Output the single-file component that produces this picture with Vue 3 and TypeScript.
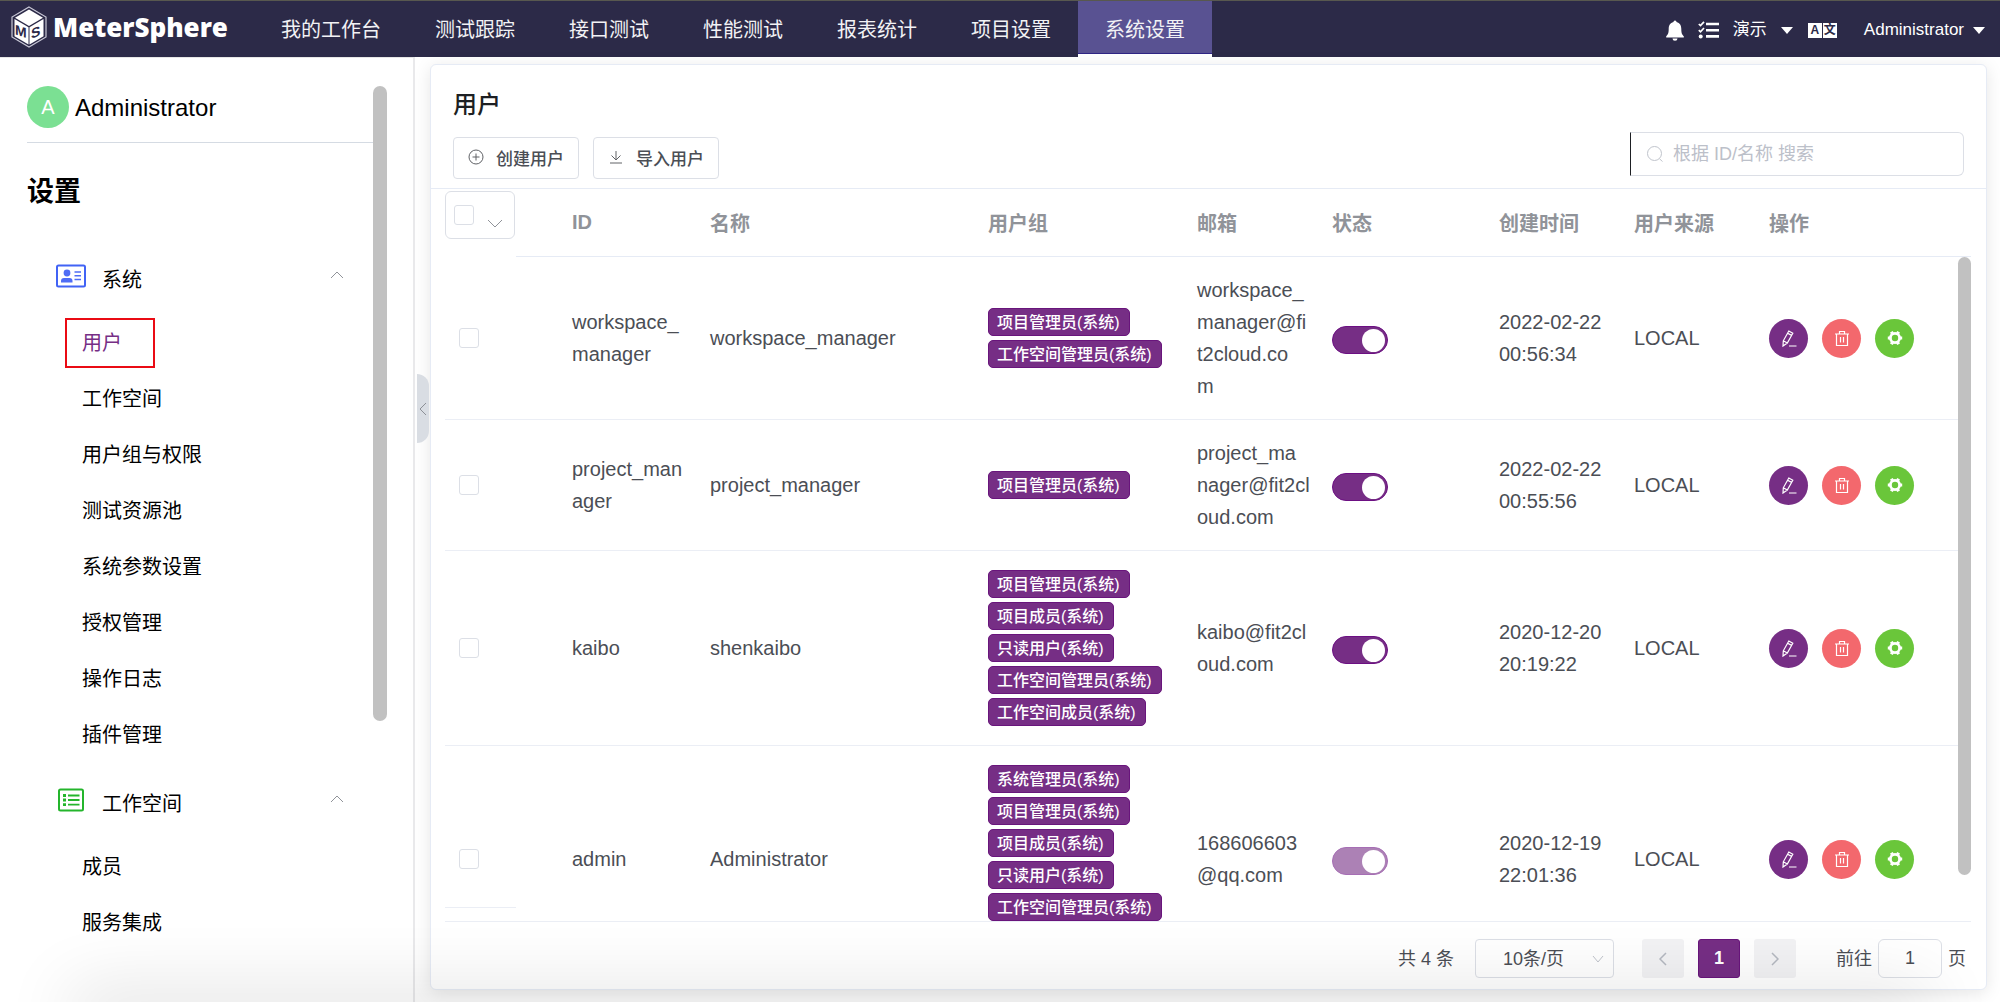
<script setup lang="ts">
import { ref } from 'vue'

interface MenuGroup {
  title: string
  icon: 'card' | 'list'
  items: string[]
}

interface User {
  id: string
  name: string
  groups: string[]
  email: string
  enabled: boolean
  locked: boolean
  created: string
  source: string
}

const navItems: string[] = ['我的工作台', '测试跟踪', '接口测试', '性能测试', '报表统计', '项目设置', '系统设置']
const activeNav = ref('系统设置')

const menuGroups: MenuGroup[] = [
  {
    title: '系统',
    icon: 'card',
    items: ['用户', '工作空间', '用户组与权限', '测试资源池', '系统参数设置', '授权管理', '操作日志', '插件管理'],
  },
  { title: '工作空间', icon: 'list', items: ['成员', '服务集成'] },
]
const activeMenu = ref('用户')

const columns: string[] = ['ID', '名称', '用户组', '邮箱', '状态', '创建时间', '用户来源', '操作']

const users = ref<User[]>([
  {
    id: 'workspace_\nmanager',
    name: 'workspace_manager',
    groups: ['项目管理员(系统)', '工作空间管理员(系统)'],
    email: 'workspace_\nmanager@fi\nt2cloud.co\nm',
    enabled: true,
    locked: false,
    created: '2022-02-22\n00:56:34',
    source: 'LOCAL',
  },
  {
    id: 'project_man\nager',
    name: 'project_manager',
    groups: ['项目管理员(系统)'],
    email: 'project_ma\nnager@fit2cl\noud.com',
    enabled: true,
    locked: false,
    created: '2022-02-22\n00:55:56',
    source: 'LOCAL',
  },
  {
    id: 'kaibo',
    name: 'shenkaibo',
    groups: ['项目管理员(系统)', '项目成员(系统)', '只读用户(系统)', '工作空间管理员(系统)', '工作空间成员(系统)'],
    email: 'kaibo@fit2cl\noud.com',
    enabled: true,
    locked: false,
    created: '2020-12-20\n20:19:22',
    source: 'LOCAL',
  },
  {
    id: 'admin',
    name: 'Administrator',
    groups: ['系统管理员(系统)', '项目管理员(系统)', '项目成员(系统)', '只读用户(系统)', '工作空间管理员(系统)'],
    email: '168606603\n@qq.com',
    enabled: true,
    locked: true,
    created: '2020-12-19\n22:01:36',
    source: 'LOCAL',
  },
])

const keyword = ref('')
const pageSize = ref('10')
const jumpTo = ref('1')
</script>

<template>
  <div class="shell">
    <header class="topbar">
      <a class="brand" href="#">
        <svg width="36" height="42" viewBox="0 0 36 42" aria-hidden="true">
          <path d="M18 1 L35 11 V31 L18 41 L1 31 V11 Z" fill="none" stroke="#c9c8d6" stroke-width="1.2" />
          <path d="M18 3.500 L32 11.700 L18 20 L4 11.700 Z" fill="#fff" />
          <path d="M3.500 13 L17.500 21.200 V38.500 L3.500 30.300 Z" fill="#fff" />
          <path d="M32.500 13 L18.500 21.200 V38.500 L32.500 30.300 Z" fill="#fff" />
          <text x="4" y="27" class="cube-letter" transform="skewY(18)">M</text>
          <text x="20" y="41" class="cube-letter" transform="skewY(-22)">S</text>
        </svg>
        <span class="brand-name">MeterSphere</span>
      </a>
      <nav class="nav">
        <a
          v-for="item in navItems"
          :key="item"
          href="#"
          class="nav-item"
          :class="{ active: item === activeNav }"
          @click.prevent="activeNav = item"
          >{{ item }}</a
        >
      </nav>
      <div class="tools">
        <button class="tool" type="button" aria-label="通知">
          <svg width="18" height="21" viewBox="0 0 18 21" fill="#fff">
            <path d="M9 0.500 a1.500 1.500 0 0 1 1.500 1.600 C14 3 15.300 5.500 15.300 9 C15.300 13.500 16.300 14.800 17.800 16.200 V17.500 H0.200 V16.200 C1.700 14.800 2.700 13.500 2.700 9 C2.700 5.500 4 3 7.500 2.100 A1.500 1.500 0 0 1 9 0.500 Z" />
            <path d="M6.500 18.500 h5 a2.500 2.200 0 0 1 -5 0 Z" />
          </svg>
        </button>
        <button class="tool" type="button" aria-label="任务">
          <svg width="21" height="18" viewBox="0 0 21 18" fill="none" stroke="#fff">
            <path d="M8 3 H21 M8 9.200 H21 M8 15.400 H21" stroke-width="2.600" />
            <path d="M0.800 3 L2.500 4.600 L6 0.800 M0.800 9.200 L2.500 10.800 L6 7" stroke-width="1.700" />
            <circle cx="2.700" cy="15.400" r="2" fill="#fff" stroke="none" />
          </svg>
        </button>
        <button class="tool workspace" type="button">
          演示
          <svg width="12" height="7" viewBox="0 0 12 7"><path d="M0 0 H12 L6 7 Z" fill="#fff" /></svg>
        </button>
        <button class="tool lang" type="button" aria-label="语言">
          <span>A</span><span>文</span>
        </button>
        <button class="tool account" type="button">
          Administrator
          <svg width="12" height="7" viewBox="0 0 12 7"><path d="M0 0 H12 L6 7 Z" fill="#fff" /></svg>
        </button>
      </div>
    </header>

    <div class="body">
      <aside class="sidebar">
        <div class="side-content">
          <div class="profile">
            <span class="avatar">A</span>
            <span class="profile-name">Administrator</span>
          </div>
          <h2 class="side-title">设置</h2>
          <section v-for="group in menuGroups" :key="group.title">
            <button class="group-head" type="button">
              <span class="group-icon">
                <svg v-if="group.icon === 'card'" width="30" height="24" viewBox="0 0 30 24">
                  <rect x="1" y="1.500" width="28" height="21" rx="1.500" fill="none" stroke="#4163f5" stroke-width="2" />
                  <circle cx="11" cy="9" r="3.400" fill="#4f6df5" />
                  <path d="M5 18.500 V17 Q5 14 8 14 H13.500 Q16.500 14 16.500 17 V18.500 Z" fill="#4f6df5" />
                  <path d="M18.500 8 H25 M18.500 11.700 H25 M18.500 15.400 H25" stroke="#4f6df5" stroke-width="1.500" />
                </svg>
                <svg v-else width="26" height="24" viewBox="0 0 26 24" fill="none" stroke="#24b52c">
                  <rect x="1" y="1.500" width="24" height="21" rx="1.500" stroke-width="2" />
                  <path d="M10 7.500 H21.500 M10 12 H21.500 M10 16.700 H21.500" stroke-width="1.800" />
                  <path d="M5 7.500 H8 M5 12 H8 M5 16.700 H8" stroke-width="2.800" />
                </svg>
              </span>
              <span class="group-title">{{ group.title }}</span>
              <svg class="group-arrow" width="14" height="8" viewBox="0 0 14 8" fill="none" stroke="#909399">
                <path d="M1 7 L7 1 L13 7" />
              </svg>
            </button>
            <ul class="side-menu">
              <li v-for="item in group.items" :key="item">
                <a
                  href="#"
                  :class="{ active: item === activeMenu && group.icon === 'card' }"
                  @click.prevent="activeMenu = item"
                  >{{ item }}</a
                >
              </li>
            </ul>
          </section>
        </div>
        <div class="side-rail"><div class="side-thumb"></div></div>
      </aside>

      <main class="main">
        <button class="fold" type="button" aria-label="收起菜单">
          <svg width="8" height="14" viewBox="0 0 8 14" fill="none" stroke="#8d9096"><path d="M7 1 L1 7 L7 13" /></svg>
        </button>
        <div class="card">
          <div class="card-head">
            <h1 class="title">用户</h1>
            <div class="toolbar">
              <div class="actions">
                <button class="btn" type="button">
                  <svg width="16" height="16" viewBox="0 0 16 16" fill="none" stroke="#606266">
                    <circle cx="8" cy="8" r="7" />
                    <path d="M8 4.500 V11.500 M4.500 8 H11.500" />
                  </svg>
                  创建用户
                </button>
                <button class="btn" type="button">
                  <svg width="16" height="16" viewBox="0 0 16 16" fill="none" stroke="#606266">
                    <path d="M8 2 V11 M3.500 6.500 L8 11 L12.500 6.500 M2 14 H14" />
                  </svg>
                  导入用户
                </button>
              </div>
              <label class="search">
                <svg width="18" height="18" viewBox="0 0 18 18" fill="none" stroke="#c0c4cc">
                  <circle cx="8.500" cy="8.500" r="7" />
                  <path d="M13.500 13.800 L16.500 16.500" />
                </svg>
                <input v-model="keyword" type="text" placeholder="根据 ID/名称 搜索" aria-label="搜索" />
              </label>
            </div>
          </div>

          <div class="table-area">
            <div class="table-view">
              <table class="users">
                <colgroup>
                  <col class="c-check" />
                  <col class="c-gap" />
                  <col class="c-id" />
                  <col />
                  <col class="c-group" />
                  <col class="c-mid" />
                  <col class="c-status" />
                  <col class="c-mid" />
                  <col class="c-mid" />
                  <col class="c-ops" />
                </colgroup>
                <thead>
                  <tr>
                    <th class="pick-all">
                      <div class="pick-box">
                        <input type="checkbox" class="tick" aria-label="全选" />
                        <svg width="16" height="9" viewBox="0 0 16 9" fill="none" stroke="#909399"><path d="M1 1 L8 8 L15 1" /></svg>
                      </div>
                    </th>
                    <th></th>
                    <th v-for="col in columns" :key="col">{{ col }}</th>
                  </tr>
                </thead>
                <tbody>
                  <tr v-for="user in users" :key="user.name">
                    <td><input type="checkbox" class="tick" :aria-label="user.name" /></td>
                    <td></td>
                    <td>{{ user.id }}</td>
                    <td>{{ user.name }}</td>
                    <td class="group-cell">
                      <div class="tags">
                        <span v-for="group in user.groups" :key="group" class="tag">{{ group }}</span>
                      </div>
                    </td>
                    <td>{{ user.email }}</td>
                    <td>
                      <input v-model="user.enabled" type="checkbox" role="switch" class="switch" :disabled="user.locked" aria-label="状态" />
                    </td>
                    <td>{{ user.created }}</td>
                    <td>{{ user.source }}</td>
                    <td>
                      <div class="ops">
                        <button class="op edit" type="button" aria-label="编辑">
                          <svg width="16" height="17" viewBox="0 0 16 17" fill="none" stroke="#fff" stroke-width="1.200">
                            <path d="M7.800 1 L11.800 3.200 L6.300 13 L2 16 L2.300 10.800 Z M6.600 3.200 L10.600 5.400 M2.300 10.800 L6.300 13 M8 16 H15.500" />
                          </svg>
                        </button>
                        <button class="op remove" type="button" aria-label="删除">
                          <svg width="16" height="17" viewBox="0 0 16 17" fill="none" stroke="#fff" stroke-width="1.200">
                            <path d="M1 4 H15 M5.500 4 V1.500 H10.500 V4 M2.500 4 V15.500 H13.500 V4 M6.500 7 V12.500 M9.500 7 V12.500" />
                          </svg>
                        </button>
                        <button class="op config" type="button" aria-label="设置">
                          <svg width="16" height="16" viewBox="0 0 16 16" fill="none" stroke="#fff">
                            <circle cx="8" cy="8" r="4.600" stroke-width="2.800" />
                            <path d="M12.500 8 H15.200 M0.800 8 H3.500 M10.200 4.200 L11.600 1.800 M5.800 4.200 L4.400 1.800 M10.200 11.800 L11.600 14.200 M5.800 11.800 L4.400 14.200" stroke-width="3.200" />
                          </svg>
                        </button>
                      </div>
                    </td>
                  </tr>
                </tbody>
              </table>
            </div>
            <div class="rail"><div class="thumb"></div></div>
          </div>

          <footer class="pager">
            <span class="total">共 4 条</span>
            <span class="size">
              <select v-model="pageSize" aria-label="每页条数">
                <option value="10">10条/页</option>
              </select>
              <svg width="12" height="8" viewBox="0 0 12 8" fill="none" stroke="#c0c4cc"><path d="M1 1 L6 7 L11 1" /></svg>
            </span>
            <button class="page" type="button" aria-label="上一页" disabled>
              <svg width="8" height="14" viewBox="0 0 8 14" fill="none" stroke="#b4b8c0" stroke-width="1.500"><path d="M7 1 L1 7 L7 13" /></svg>
            </button>
            <button class="page current" type="button">1</button>
            <button class="page" type="button" aria-label="下一页" disabled>
              <svg width="8" height="14" viewBox="0 0 8 14" fill="none" stroke="#b4b8c0" stroke-width="1.500"><path d="M1 1 L7 7 L1 13" /></svg>
            </button>
            <label class="jump">前往 <input v-model="jumpTo" type="text" /> 页</label>
          </footer>
        </div>
      </main>
    </div>
    <div class="bottom-shade"></div>
  </div>
</template>

<style>
body {
  margin: 0;
}
</style>

<style scoped>
* {
  box-sizing: border-box;
}
.shell {
  display: flex;
  flex-direction: column;
  height: 100vh;
  overflow: hidden;
  position: relative;
  background: #fff;
  color: #4b4e55;
  font-family: 'Liberation Sans', 'Noto Sans CJK SC', sans-serif;
  font-size: 20px;
}
a {
  color: inherit;
  text-decoration: none;
}
button,
input,
select {
  font-family: inherit;
  color: inherit;
  margin: 0;
}
button {
  border: 0;
  padding: 0;
  background: none;
}
svg {
  display: block;
  flex: none;
}

.topbar {
  display: flex;
  flex: none;
  height: 57px;
  border-top: 1px solid #58584f;
  background: #2c2a48;
  color: #fff;
}
.brand {
  display: flex;
  align-items: center;
  gap: 6px;
  width: 254px;
  padding: 0 0 4px 11px;
}
.brand-name {
  font-family: 'Open Sans', sans-serif;
  font-weight: 800;
  font-size: 26px;
}
.cube-letter {
  font-size: 14px;
  font-weight: 700;
  fill: #2c2a48;
}
.nav {
  display: flex;
}
.nav-item {
  display: flex;
  align-items: center;
  height: 56px;
  padding: 2px 27px 0;
  border-bottom: 3px solid transparent;
  color: #f2f2f5;
}
.nav-item.active {
  background: #595292;
  background-clip: padding-box;
  border-bottom-color: #fff;
  box-shadow: inset 0 -1px #2f2585;
}
.tools {
  display: flex;
  align-items: center;
  margin-left: auto;
  padding: 2px 15px 0 0;
}
.tool {
  display: flex;
  align-items: center;
  font-size: 17px;
  line-height: 24px;
  margin-left: 14px;
}
.workspace {
  gap: 14px;
}
.lang {
  gap: 1px;
  margin-left: 15px;
}
.lang span {
  width: 14px;
  height: 15px;
  background: #fff;
  color: #2c2a48;
  font-size: 12px;
  font-weight: 700;
  line-height: 15px;
  text-align: center;
}
.account {
  gap: 9px;
  margin-left: 27px;
}

.body {
  display: flex;
  flex: 1;
  min-height: 0;
}
.sidebar {
  display: flex;
  flex: none;
  width: 415px;
  padding: 28px 26px 9px 27px;
  border-top: 1px solid #e6e6e6;
  border-right: 2px solid #e9e9eb;
  color: #000;
}
.side-content {
  flex: 1;
  min-width: 0;
}
.profile {
  display: flex;
  align-items: center;
  gap: 6px;
  height: 57px;
  padding-bottom: 14px;
  border-bottom: 1px solid #d5dbe3;
  font-size: 24px;
}
.profile-name {
  padding-top: 2px;
}
.avatar {
  width: 42px;
  height: 42px;
  border-radius: 50%;
  background: #7be093;
  color: #fff;
  font-size: 20px;
  line-height: 42px;
  text-align: center;
}
.side-title {
  margin: 29px 0;
  font-size: 27px;
  line-height: 40px;
  font-weight: 700;
}
.group-head {
  display: flex;
  align-items: center;
  width: 100%;
  height: 74px;
  padding: 0 29px;
  font-size: 20px;
}
.group-icon {
  display: flex;
  justify-content: center;
  width: 30px;
  margin-right: 16px;
  padding-bottom: 4px;
}
.group-arrow {
  margin: 0 0 6px auto;
}
.side-menu {
  list-style: none;
  margin: 0;
  padding: 0 0 2px 38px;
}
.side-menu li {
  display: flex;
  align-items: center;
  height: 56px;
}
.side-menu a {
  padding: 0 31px 0 15px;
  border: 2px solid transparent;
  line-height: 46px;
}
.side-menu a.active {
  border-color: #ea0b14;
  color: #762e85;
}
.side-rail {
  width: 14px;
}
.side-thumb {
  height: 70%;
  border-radius: 7px;
  background: #c1c1c1;
}

.main {
  position: relative;
  display: flex;
  flex: 1;
  min-width: 0;
  padding: 7px 13px 12px 15px;
}
.fold {
  position: absolute;
  left: 2px;
  top: 317px;
  display: flex;
  align-items: center;
  justify-content: center;
  width: 12px;
  height: 69px;
  border-radius: 0 12px 12px 0;
  background: #d9dde3;
}
.card {
  display: flex;
  flex: 1;
  flex-direction: column;
  min-width: 0;
  border: 1px solid #e6ebf5;
  border-radius: 6px;
  background: #fff;
  box-shadow: 0 3px 17px rgba(0, 0, 0, 0.1);
}
.card-head {
  padding: 21px 22px 9px;
  border-bottom: 1px solid #e6ebf5;
}
.title {
  margin: 0 0 8px;
  color: #1d1f23;
  font-size: 24px;
  font-weight: 500;
  line-height: 38px;
}
.toolbar {
  display: flex;
  justify-content: space-between;
  height: 47px;
}
.actions {
  display: flex;
  align-items: flex-end;
  gap: 14px;
}
.btn {
  display: flex;
  align-items: center;
  gap: 12px;
  height: 42px;
  padding: 0 14px 2px;
  border: 1px solid #dcdfe6;
  border-radius: 4px;
  font-size: 17px;
  font-weight: 500;
}
.search {
  display: flex;
  align-items: center;
  gap: 9px;
  width: 334px;
  height: 44px;
  padding: 0 15px;
  border: 1px solid #dcdfe6;
  border-left-color: #1d1f23;
  border-radius: 0 6px 6px 0;
}
.search input {
  flex: 1;
  min-width: 0;
  padding: 0;
  border: 0;
  outline: 0;
  background: none;
  font-size: 18px;
}
.search input::placeholder {
  color: #bcc0c9;
}

.table-area {
  position: relative;
  display: flex;
  flex: 1;
  min-height: 0;
  margin: 0 15px 0 14px;
  border-bottom: 1px solid #ebeef5;
}
/* Lower edge of the pinned tick-box column */
.table-area::after {
  content: '';
  position: absolute;
  left: 0;
  bottom: 13px;
  width: 71px;
  height: 1px;
  background: #ebeef5;
}
.table-view {
  flex: 1;
  min-width: 0;
  overflow: hidden;
}
.users {
  width: 100%;
  table-layout: fixed;
  border-collapse: separate;
  border-spacing: 0;
}
.c-check {
  width: 71px;
}
.c-gap {
  width: 42px;
}
.c-id {
  width: 138px;
}
.c-group {
  width: 209px;
}
.c-mid {
  width: 135px;
}
.c-status {
  width: 167px;
}
.c-ops {
  width: 203px;
}
.users th {
  height: 68px;
  padding: 0 0 0 14px;
  border-bottom: 1px solid #e6ebf5;
  color: #909399;
  font-weight: 700;
  text-align: left;
}
.users th.pick-all {
  padding: 2px 0 0;
  border-bottom: 0;
  vertical-align: top;
}
.pick-box {
  display: flex;
  align-items: center;
  gap: 13px;
  width: 70px;
  height: 48px;
  padding-left: 8px;
  border: 1px solid #dcdfe6;
  border-radius: 6px;
}
.pick-box svg {
  margin-top: 16px;
}
.users td {
  padding: 17px 0 17px 14px;
  border-bottom: 1px solid #ebeef5;
  line-height: 32px;
  white-space: pre-line;
  vertical-align: middle;
}
/* The last row runs on below the scroll area */
.users tr:last-child td {
  height: 227px;
}
.users tr:last-child .group-cell {
  vertical-align: top;
}
.tick {
  display: block;
  appearance: none;
  width: 20px;
  height: 20px;
  border: 1px solid #dcdfe6;
  border-radius: 3px;
  background: #fff;
}
.tags {
  display: flex;
  flex-direction: column;
  align-items: flex-start;
  gap: 4px;
  padding: 2px 0;
}
.tag {
  height: 28px;
  padding: 0 9px 0 8px;
  border: 1px solid #69157c;
  border-radius: 5px;
  background: #762e85;
  color: #fff;
  font-size: 16px;
  font-weight: 500;
  line-height: 27px;
  white-space: nowrap;
}
.switch {
  display: flex;
  align-items: center;
  appearance: none;
  width: 56px;
  height: 28px;
  padding: 0 2px;
  margin-top: 4px;
  border: 1px solid #6c0f83;
  border-radius: 14px;
  background: #762e85;
}
.switch::before {
  content: '';
  width: 23px;
  height: 23px;
  border-radius: 50%;
  background: #fff;
}
.switch:checked::before {
  margin-left: auto;
}
.switch:disabled {
  opacity: 0.6;
}
.ops {
  display: flex;
  gap: 14px;
}
.op {
  display: flex;
  align-items: center;
  justify-content: center;
  width: 39px;
  height: 39px;
  border-radius: 50%;
}
.edit {
  background: #762e85;
}
.remove {
  background: #f3686d;
}
.config {
  background: #6ac63a;
}
.rail {
  width: 13px;
  margin-top: 67px;
  border-top: 1px solid #e6ebf5;
}
.thumb {
  height: 93%;
  border-radius: 7px;
  background: #c1c1c1;
}

.pager {
  display: flex;
  align-items: center;
  justify-content: flex-end;
  gap: 14px;
  padding: 17px 20px 11px;
  font-size: 18px;
  line-height: 24px;
}
.total {
  margin-right: 7px;
}
.size {
  position: relative;
  margin-right: 14px;
}
.size select {
  display: block;
  appearance: none;
  width: 139px;
  height: 39px;
  padding: 0 27px;
  border: 1px solid #dcdfe6;
  border-radius: 4px;
  background: none;
  font-size: 18px;
}
.size svg {
  position: absolute;
  right: 10px;
  top: 16px;
}
.page {
  display: flex;
  align-items: center;
  justify-content: center;
  width: 42px;
  height: 39px;
  border-radius: 3px;
  background: #f2f2f4;
  font-size: 18px;
}
.page.current {
  border: 1px solid #69157c;
  background: #762e85;
  color: #fff;
  font-weight: 700;
}
.jump {
  display: flex;
  align-items: center;
  gap: 6px;
  margin-left: 26px;
}
.jump input {
  width: 64px;
  height: 39px;
  padding: 0;
  border: 1px solid #dcdfe6;
  border-radius: 6px;
  background: none;
  font-size: 18px;
  text-align: center;
}
.bottom-shade {
  position: absolute;
  left: 80px;
  right: 80px;
  bottom: -20px;
  height: 20px;
  box-shadow: 0 0 70px 10px rgba(0, 0, 0, 0.14);
  pointer-events: none;
}
</style>
